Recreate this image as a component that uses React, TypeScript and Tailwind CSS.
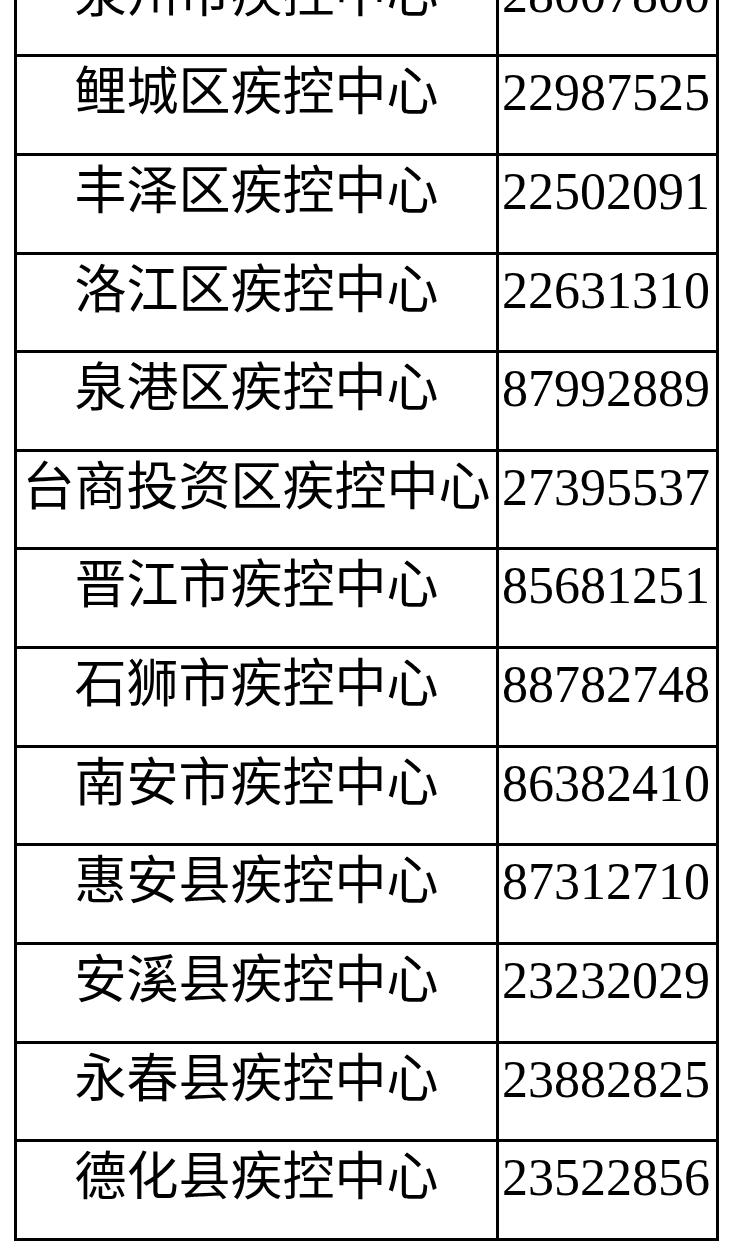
import React from "react";

const rows: [string, string][] = [
  ["泉州市疾控中心", "28007800"],
  ["鲤城区疾控中心", "22987525"],
  ["丰泽区疾控中心", "22502091"],
  ["洛江区疾控中心", "22631310"],
  ["泉港区疾控中心", "87992889"],
  ["台商投资区疾控中心", "27395537"],
  ["晋江市疾控中心", "85681251"],
  ["石狮市疾控中心", "88782748"],
  ["南安市疾控中心", "86382410"],
  ["惠安县疾控中心", "87312710"],
  ["安溪县疾控中心", "23232029"],
  ["永春县疾控中心", "23882825"],
  ["德化县疾控中心", "23522856"],
];

export default function App() {
  return (
    <div className="w-[737px] h-[1254px] overflow-hidden bg-white">
      <div className="ml-[14px] -mt-[41.28px] w-[705px] border-l-[3px] border-r-[3px] border-black">
        {rows.map(([name, phone], i) => (
          <div
            key={i}
            className="flex h-[98.64px] border-b-[3px] border-black box-border"
          >
            <div
              className="w-[479px] text-center text-[52px] leading-none pt-[5px] text-black whitespace-nowrap"
              style={{ fontFamily: '"Noto Sans CJK SC", "Noto Sans", sans-serif' }}
            >
              {name}
            </div>
            <div
              className="flex-1 border-l-[3px] border-black pl-[3px] pt-[10px] text-[52px] leading-none text-black whitespace-nowrap"
              style={{ fontFamily: '"Liberation Serif", "Times New Roman", serif' }}
            >
              {phone}
            </div>
          </div>
        ))}
      </div>
    </div>
  );
}
